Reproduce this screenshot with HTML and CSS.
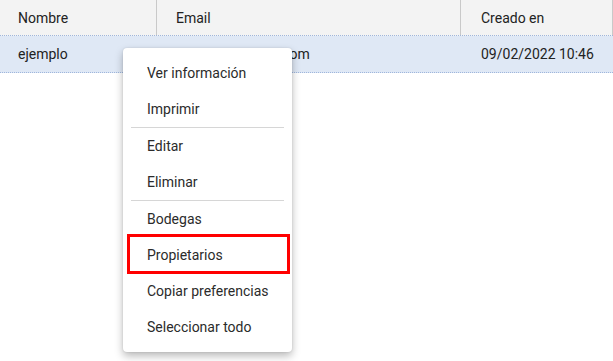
FILE: index.html
```html
<!DOCTYPE html>
<html lang="es">
<head>
    <meta charset="UTF-8">
    <meta name="viewport" content="width=device-width, initial-scale=1.0">
    <title>Listado</title>
    <link rel="stylesheet" href="styles.css">
</head>
<body>
    <div class="grid">
        <div class="grid-head">
            <div class="cell col-name">Nombre</div>
            <div class="cell col-email">Email</div>
            <div class="cell col-date">Creado en</div>
        </div>
        <div class="grid-row selected">
            <div class="cell col-name">ejemplo</div>
            <div class="cell col-email">ejemplo@correo.com</div>
            <div class="cell col-date">09/02/2022 10:46</div>
        </div>
    </div>

    <!-- Context menu -->
    <ul class="context-menu">
        <li>Ver información</li>
        <li>Imprimir</li>
        <li class="divider"></li>
        <li>Editar</li>
        <li>Eliminar</li>
        <li class="divider"></li>
        <li>Bodegas</li>
        <li class="highlight">Propietarios</li>
        <li>Copiar preferencias</li>
        <li>Seleccionar todo</li>
    </ul>
</body>
</html>
```

FILE: styles.css
```css
* {
    margin: 0;
    padding: 0;
    box-sizing: border-box;
}

body {
    font-family: Roboto, "Liberation Sans", Arial, sans-serif;
    font-size: 14px;
    color: #222;
    background-color: white;
}

.grid {
    width: 613px;
}

.grid-head,
.grid-row {
    display: flex;
}

.grid-head {
    height: 36px;
    background-color: #f3f3f3;
    border-bottom: 1px dotted #9fb6dc;
}

.grid-row {
    height: 37px;
    border-bottom: 1px dotted #9fb6dc;
}

.grid-row.selected {
    background-color: #dfe8f5;
}

.cell {
    display: flex;
    align-items: center;
    padding-left: 18px;
}

.col-name {
    width: 157px;
}

.col-email {
    width: 304px;
    padding-left: 19px;
}

.col-date {
    width: 152px;
    padding-left: 20px;
}

.grid-head .cell {
    border-right: 1px solid #c9c9c9;
}

.context-menu {
    position: absolute;
    left: 123px;
    top: 48px;
    width: 169px;
    padding: 7px 0;
    list-style: none;
    background-color: white;
    border-radius: 4px;
    box-shadow: 0 4px 9px rgba(0, 0, 0, 0.28), 0 0 2px rgba(0, 0, 0, 0.12);
}

.context-menu li {
    position: relative;
    height: 36px;
    line-height: 36px;
    padding-left: 24px;
    color: #2b2b2b;
    white-space: nowrap;
}

.context-menu li.divider {
    height: 1px;
    margin: 0 8px;
    padding: 0;
    background-color: #d6d6d6;
}

.context-menu li.highlight::after {
    content: "";
    box-sizing: border-box;
    position: absolute;
    left: 4px;
    top: -3px;
    width: 163px;
    height: 40px;
    border: 3px solid #f00;
}
```
